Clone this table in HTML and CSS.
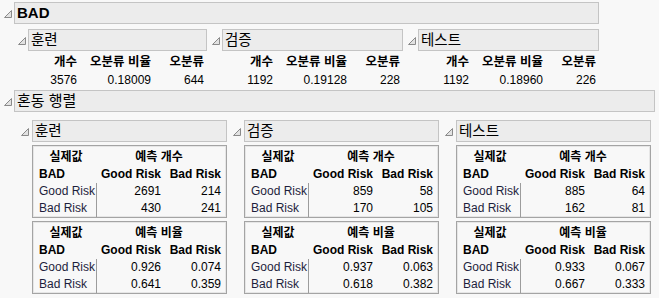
FILE: index.html
```html
<!DOCTYPE html>
<html lang="ko">
<head>
<meta charset="utf-8">
<title>BAD</title>
<link rel="stylesheet" href="styles.css">
</head>
<body>
<section class="outline top">
  <div class="ohead lvl1"><svg class="tri" viewBox="0 0 8 8"><path d="M0.5 7.5H7.5V0.5Z"/></svg><div class="obar main bold w-bad">BAD</div></div>
  <div class="stats-row">
    <div class="scol">
      <div class="ohead"><svg class="tri" viewBox="0 0 8 8"><path d="M0.5 7.5H7.5V0.5Z"/></svg><div class="obar sub">훈련</div></div>
      <div class="stats">
        <span class="h">개수</span><span class="h">오분류 비율</span><span class="h">오분류</span>
        <span>3576</span><span>0.18009</span><span>644</span>
      </div>
    </div>
    <div class="scol">
      <div class="ohead"><svg class="tri" viewBox="0 0 8 8"><path d="M0.5 7.5H7.5V0.5Z"/></svg><div class="obar sub">검증</div></div>
      <div class="stats">
        <span class="h">개수</span><span class="h">오분류 비율</span><span class="h">오분류</span>
        <span>1192</span><span>0.19128</span><span>228</span>
      </div>
    </div>
    <div class="scol">
      <div class="ohead"><svg class="tri" viewBox="0 0 8 8"><path d="M0.5 7.5H7.5V0.5Z"/></svg><div class="obar sub">테스트</div></div>
      <div class="stats">
        <span class="h">개수</span><span class="h">오분류 비율</span><span class="h">오분류</span>
        <span>1192</span><span>0.18960</span><span>226</span>
      </div>
    </div>
  </div>
</section>

<section class="outline conf">
  <div class="ohead lvl1"><svg class="tri" viewBox="0 0 8 8"><path d="M0.5 7.5H7.5V0.5Z"/></svg><div class="obar main w-conf">혼동 행렬</div></div>
  <div class="mat-row">
    <div class="mcol">
      <div class="ohead"><svg class="tri" viewBox="0 0 8 8"><path d="M0.5 7.5H7.5V0.5Z"/></svg><div class="obar sub">훈련</div></div>
      <div class="mtable">
        <span class="hd c">실제값</span><span class="hd span2">예측 개수</span>
        <span class="hd">BAD</span><span class="hd r">Good Risk</span><span class="hd r">Bad Risk</span>
        <span class="lbl">Good Risk</span><span class="r">2691</span><span class="r">214</span>
        <span class="lbl">Bad Risk</span><span class="r">430</span><span class="r">241</span>
      </div>
      <div class="mtable">
        <span class="hd c">실제값</span><span class="hd span2">예측 비율</span>
        <span class="hd">BAD</span><span class="hd r">Good Risk</span><span class="hd r">Bad Risk</span>
        <span class="lbl">Good Risk</span><span class="r">0.926</span><span class="r">0.074</span>
        <span class="lbl">Bad Risk</span><span class="r">0.641</span><span class="r">0.359</span>
      </div>
    </div>
    <div class="mcol">
      <div class="ohead"><svg class="tri" viewBox="0 0 8 8"><path d="M0.5 7.5H7.5V0.5Z"/></svg><div class="obar sub">검증</div></div>
      <div class="mtable">
        <span class="hd c">실제값</span><span class="hd span2">예측 개수</span>
        <span class="hd">BAD</span><span class="hd r">Good Risk</span><span class="hd r">Bad Risk</span>
        <span class="lbl">Good Risk</span><span class="r">859</span><span class="r">58</span>
        <span class="lbl">Bad Risk</span><span class="r">170</span><span class="r">105</span>
      </div>
      <div class="mtable">
        <span class="hd c">실제값</span><span class="hd span2">예측 비율</span>
        <span class="hd">BAD</span><span class="hd r">Good Risk</span><span class="hd r">Bad Risk</span>
        <span class="lbl">Good Risk</span><span class="r">0.937</span><span class="r">0.063</span>
        <span class="lbl">Bad Risk</span><span class="r">0.618</span><span class="r">0.382</span>
      </div>
    </div>
    <div class="mcol">
      <div class="ohead"><svg class="tri" viewBox="0 0 8 8"><path d="M0.5 7.5H7.5V0.5Z"/></svg><div class="obar sub">테스트</div></div>
      <div class="mtable">
        <span class="hd c">실제값</span><span class="hd span2">예측 개수</span>
        <span class="hd">BAD</span><span class="hd r">Good Risk</span><span class="hd r">Bad Risk</span>
        <span class="lbl">Good Risk</span><span class="r">885</span><span class="r">64</span>
        <span class="lbl">Bad Risk</span><span class="r">162</span><span class="r">81</span>
      </div>
      <div class="mtable">
        <span class="hd c">실제값</span><span class="hd span2">예측 비율</span>
        <span class="hd">BAD</span><span class="hd r">Good Risk</span><span class="hd r">Bad Risk</span>
        <span class="lbl">Good Risk</span><span class="r">0.933</span><span class="r">0.067</span>
        <span class="lbl">Bad Risk</span><span class="r">0.667</span><span class="r">0.333</span>
      </div>
    </div>
  </div>
</section>
</body>
</html>
```

FILE: styles.css
```css
html, body {
  margin: 0;
  padding: 0;
}
body {
  width: 659px;
  height: 298px;
  overflow: hidden;
  background: #f8f8f8;
  color: #000;
  font-family: "Liberation Sans", "Noto Sans CJK KR", sans-serif;
  font-size: 12px;
}
.outline {
  display: flex;
  flex-direction: column;
}
.top {
  padding-top: 2px;
}
.conf {
  margin-top: 1px;
}
.ohead {
  display: flex;
  align-items: flex-start;
}
.lvl1 {
  padding-left: 4px;
}
.tri {
  flex: none;
  width: 8px;
  height: 8px;
  margin-top: 8px;
  margin-right: 2px;
  fill: #e2e2e2;
  stroke: #8a8a8a;
  stroke-width: 1;
}
.obar {
  box-sizing: border-box;
  height: 22px;
  line-height: 20px;
  background: #ececec;
  border: 1px solid #c4c4c4;
  padding-left: 2px;
  white-space: nowrap;
}
.main {
  font-size: 15px;
}
.bold {
  font-weight: bold;
}
.w-bad {
  width: 585px;
}
.w-conf {
  width: 641px;
}
.sub {
  flex: 1;
  font-size: 14.5px;
}

/* summary stats */
.stats-row {
  display: flex;
  padding-left: 18px;
  margin-top: 5px;
}
.scol {
  width: 189px;
  display: flex;
  flex-direction: column;
}
.scol + .scol {
  width: 191px;
  margin-left: 5px;
}
.stats {
  display: grid;
  grid-template-columns: 40px 74px 53px;
  justify-content: end;
  padding-right: 3px;
  margin-top: 2px;
  line-height: 18px;
  text-align: right;
  white-space: nowrap;
}
.stats .h {
  font-weight: bold;
  font-size: 12.5px;
}

/* confusion matrices */
.mat-row {
  display: flex;
  padding-left: 21px;
  margin-top: 8px;
  gap: 6px;
}
.mcol {
  width: 206px;
  display: flex;
  flex-direction: column;
}
.mcol .tri {
  margin-right: 3px;
}
.mtable {
  box-sizing: border-box;
  width: 195px;
  height: 73px;
  margin-left: 11px;
  margin-top: 3px;
  padding: 3px 5px 2px 6px;
  border: 1px solid #a4a4a4;
  box-shadow: inset 0 0 0 1px #e6e6e6;
  display: grid;
  grid-template-columns: 58px 64px 60px;
  grid-auto-rows: 17px;
  line-height: 17px;
  white-space: nowrap;
}
.mtable .hd {
  font-weight: bold;
}
.mtable .c {
  text-align: center;
  padding-right: 4px;
}
.mtable .span2 {
  grid-column: 2 / 4;
  text-align: center;
}
.mtable .r {
  text-align: right;
}
.mtable .lbl {
  color: #1e1e3c;
  border-right: 1px solid #9c9c9c;
}
```
